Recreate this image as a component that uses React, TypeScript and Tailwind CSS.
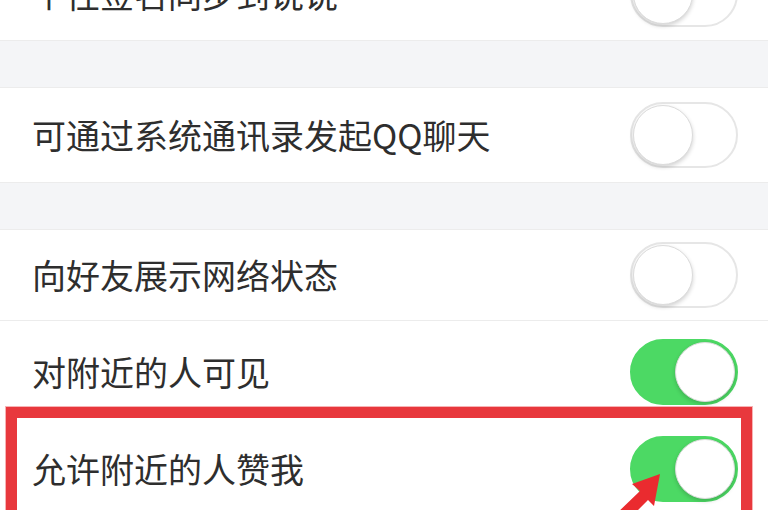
import React from "react";

type RowProps = { label: string; on?: boolean; className?: string };

function Toggle({ on }: { on?: boolean }) {
  return (
    <div
      className={`flex h-[66px] w-[108px] shrink-0 items-center rounded-full border-2 p-[1px] ${
        on ? "justify-end border-[#4cd964] bg-[#4cd964]" : "justify-start border-[#e6e6e6] bg-white"
      }`}
    >
      <div className="h-[60px] w-[60px] rounded-full border border-[#dcdcdc] bg-white shadow-[0_2px_4px_rgba(0,0,0,0.18)]" />
    </div>
  );
}

function Row({ label, on, className = "" }: RowProps) {
  return (
    <div className={`flex items-center justify-between border-b border-[#ececec] bg-white pl-[32px] pr-[30px] ${className}`}>
      <span className="text-[34px] leading-none text-[#2e2e2e]">{label}</span>
      <Toggle on={on} />
    </div>
  );
}

export default function App() {
  return (
    <main
      className="relative h-[510px] w-[768px] overflow-hidden bg-[#f4f5f7]"
      style={{ fontFamily: '"Noto Sans CJK SC", "Noto Sans", sans-serif' }}
    >
      <div className="-mt-[52px] flex flex-col">
        <Row label="个性签名同步到说说" className="h-[93px]" />
        <div className="h-[46px]" />
        <Row label="可通过系统通讯录发起QQ聊天" className="h-[96px] border-t" />
        <div className="h-[46px]" />
        <Row label="向好友展示网络状态" className="h-[92px] border-t" />
        <Row label="对附近的人可见" on className="h-[101px] border-b-0" />
        <div className="relative">
          <Row label="允许附近的人赞我" on className="h-[94px]" />
          {/* red highlight box */}
          <div className="pointer-events-none absolute left-[6px] right-[16px] top-[-15px] h-[130px] border-[11px] border-[#e8383d] outline outline-1 outline-[#f7b3b5]" />
          {/* red arrow */}
          <svg
            className="pointer-events-none absolute left-[600px] top-[42px]"
            width="70"
            height="60"
            viewBox="0 0 70 60"
          >
            <path d="M60 10 L32 20 L40 27 L14 52 L24 60 L48 36 L54 42 Z" fill="#ea2b2f" />
          </svg>
        </div>
      </div>
    </main>
  );
}
